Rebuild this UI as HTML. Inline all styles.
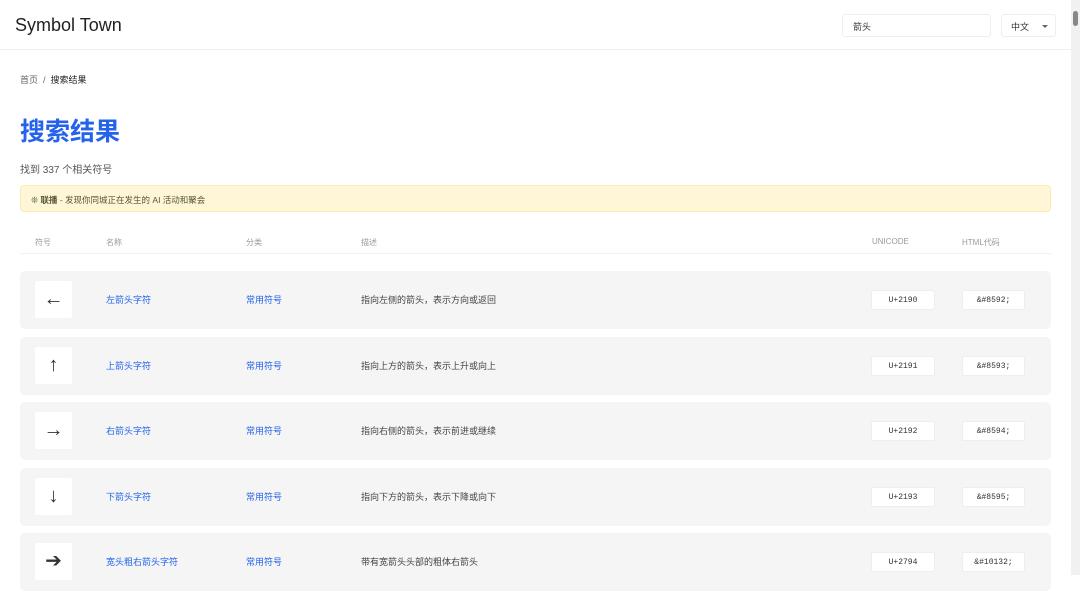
<!DOCTYPE html><html><head><meta charset="utf-8"><style>
*{box-sizing:border-box;margin:0;padding:0}
body{width:1080px;height:575px;overflow:hidden;background:#fff;font-family:"Liberation Sans","Noto Sans CJK SC",sans-serif;color:#333;position:relative}
.hdr{position:absolute;left:0;top:0;width:1071px;height:50px;border-bottom:1px solid #f0f0f0}
.logo{position:absolute;left:15px;top:15px;font-size:18px;color:#222}
.search{position:absolute;left:842px;top:14px;width:149px;height:23px;border:1px solid #eee;border-radius:3px;font-size:9px;padding:5px 10px;color:#333}
.sel{position:absolute;left:1001px;top:14px;width:55px;height:23px;border:1px solid #eee;border-radius:3px;font-size:9px;padding:5px 9px}
.sel:after{content:"";position:absolute;right:7px;top:10px;border:3px solid transparent;border-top:3px solid #666}
.sb{position:absolute;left:1071px;top:0;width:9px;height:575px;background:#f1f1f1}
.sb div{position:absolute;left:2px;top:11px;width:5px;height:15px;background:#888;border-radius:3px}
.bc{position:absolute;left:20px;top:73px;font-size:9px;color:#666}
.bc b{color:#222;font-weight:normal}
h1{position:absolute;left:20px;top:116px;font-size:25px;color:#2563eb;font-weight:bold;line-height:32px}
.cnt{position:absolute;left:20px;top:161px;font-size:10px;color:#555}
.ad{position:absolute;left:20px;top:185px;width:1031px;height:27px;background:#fef6d7;border:1px solid #fbebb0;border-radius:4px;font-size:8.5px;padding:8px 10px;color:#553}
.th{position:absolute;top:237px;font-size:8px;color:#999}
.thl{position:absolute;left:20px;top:253px;width:1031px;border-top:1px solid #f2f2f2}
.row{position:absolute;left:20px;width:1031px;height:58px;background:#f5f5f5;border-radius:5px}
.sym{position:absolute;left:15px;top:10px;width:37px;height:37px;background:#fff;border-radius:2px;text-align:center;font-size:20px;line-height:37px;color:#333}
.nm{position:absolute;left:86px;top:22px;font-size:9px;color:#2563eb}
.ct{position:absolute;left:226px;top:22px;font-size:9px;color:#2563eb}
.ds{position:absolute;left:341px;top:22px;font-size:9px;color:#444}
.uc,.hc{position:absolute;top:19px;height:20px;background:#fff;border:1px solid #eee;border-radius:2px;font-family:"Liberation Mono",monospace;font-size:8px;display:flex;align-items:center;justify-content:center;color:#333}
.uc{left:851px;width:64px}.hc{left:942px;width:63px}
</style></head><body>
<div class="hdr"><div class="logo">Symbol Town</div><div class="search">箭头</div><div class="sel">中文</div></div>
<div class="sb"><div></div></div>
<div class="bc">首页 &nbsp;/&nbsp; <b>搜索结果</b></div>
<h1>搜索结果</h1>
<div class="cnt">找到 337 个相关符号</div>
<div class="ad">❊ <b>联播</b> - 发现你同城正在发生的 AI 活动和聚会</div>
<div class="th" style="left:35px">符号</div><div class="th" style="left:106px">名称</div><div class="th" style="left:246px">分类</div><div class="th" style="left:361px">描述</div><div class="th" style="left:872px">UNICODE</div><div class="th" style="left:962px">HTML代码</div>
<div class="thl"></div>
<div class="row" style="top:271px"><div class="sym">←</div><div class="nm">左箭头字符</div><div class="ct">常用符号</div><div class="ds">指向左侧的箭头，表示方向或返回</div><div class="uc">U+2190</div><div class="hc">&amp;#8592;</div></div>
<div class="row" style="top:337px"><div class="sym">↑</div><div class="nm">上箭头字符</div><div class="ct">常用符号</div><div class="ds">指向上方的箭头，表示上升或向上</div><div class="uc">U+2191</div><div class="hc">&amp;#8593;</div></div>
<div class="row" style="top:402px"><div class="sym">→</div><div class="nm">右箭头字符</div><div class="ct">常用符号</div><div class="ds">指向右侧的箭头，表示前进或继续</div><div class="uc">U+2192</div><div class="hc">&amp;#8594;</div></div>
<div class="row" style="top:468px"><div class="sym">↓</div><div class="nm">下箭头字符</div><div class="ct">常用符号</div><div class="ds">指向下方的箭头，表示下降或向下</div><div class="uc">U+2193</div><div class="hc">&amp;#8595;</div></div>
<div class="row" style="top:533px"><div class="sym">➔</div><div class="nm">宽头粗右箭头字符</div><div class="ct">常用符号</div><div class="ds">带有宽箭头头部的粗体右箭头</div><div class="uc">U+2794</div><div class="hc">&amp;#10132;</div></div>
</body></html>
